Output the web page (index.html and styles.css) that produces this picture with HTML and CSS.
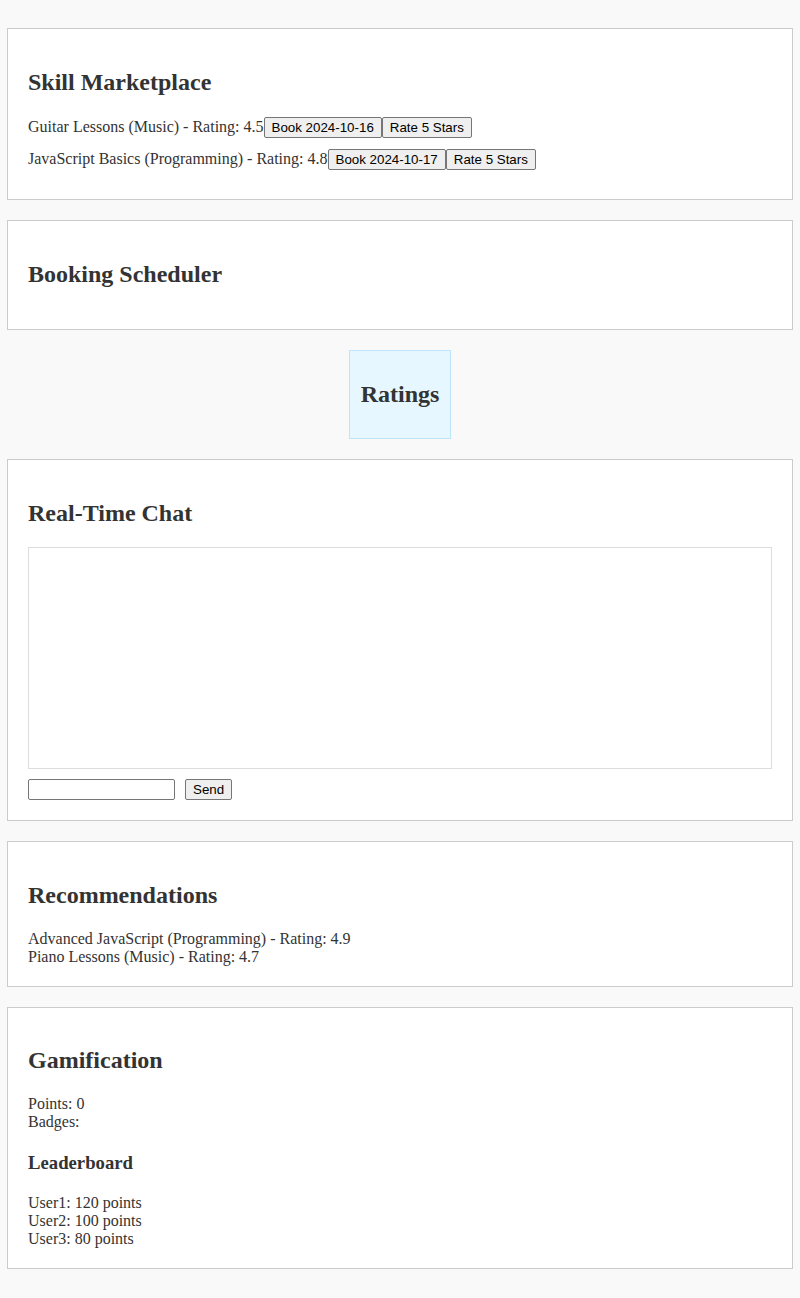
FILE: index.html
```html
<!DOCTYPE html>
<html lang="en">
<head>
<meta charset="utf-8">
<title>Skill Marketplace</title>
<link rel="stylesheet" href="styles.css">
</head>
<body>
<main class="page">
  <section class="panel">
    <h2>Skill Marketplace</h2>
    <div class="skill">Guitar Lessons (Music) - Rating: 4.5<button class="btn">Book 2024-10-16</button><button class="btn">Rate 5 Stars</button></div>
    <div class="skill">JavaScript Basics (Programming) - Rating: 4.8<button class="btn">Book 2024-10-17</button><button class="btn">Rate 5 Stars</button></div>
  </section>
  <section class="panel">
    <h2>Booking Scheduler</h2>
  </section>
  <section class="ratings">
    <h2>Ratings</h2>
  </section>
  <section class="panel">
    <h2>Real-Time Chat</h2>
    <div class="chat-log"></div>
    <div class="chat-form">
      <input class="chat-input" type="text">
      <button class="btn">Send</button>
    </div>
  </section>
  <section class="panel">
    <h2>Recommendations</h2>
    <div>Advanced JavaScript (Programming) - Rating: 4.9</div>
    <div>Piano Lessons (Music) - Rating: 4.7</div>
  </section>
  <section class="panel">
    <h2>Gamification</h2>
    <div>Points: 0</div>
    <div>Badges: </div>
    <h3>Leaderboard</h3>
    <div>User1: 120 points</div>
    <div>User2: 100 points</div>
    <div>User3: 80 points</div>
  </section>
</main>
</body>
</html>
```

FILE: styles.css
```css
html, body {
  margin: 0;
  padding: 0;
}
body {
  background: #f9f9f9;
  color: #333;
  font-family: "Liberation Serif", "Times New Roman", serif;
  font-size: 16px;
  line-height: 18px;
}
.page {
  padding: 8px 7px;
  display: flow-root;
}
.panel {
  background: #fff;
  border: 1px solid #ccc;
  padding: 20px;
  margin: 20px 0;
}
h2 {
  font-size: 24px;
  font-weight: bold;
  line-height: 27.5px;
  margin: 19.92px 0;
}
h3 {
  font-size: 18.72px;
  font-weight: bold;
  line-height: 25.5px;
  margin: 18.72px 0;
}
.skill {
  margin: 10px 0;
  height: 21.5px;
  line-height: 22px;
}
.btn {
  box-sizing: border-box;
  height: 21px;
  font-family: "Liberation Sans", Arial, sans-serif;
  font-size: 13.33px;
  color: #000;
  background: #efefef;
  border: 1px solid #767676;
  border-radius: 2px;
  padding: 0 7px;
  margin: 0;
  line-height: 19px;
  vertical-align: baseline;
}
.ratings {
  width: fit-content;
  margin: 20px auto;
  padding: 10px 11px;
  background: #e6f7ff;
  border: 1px solid #bde6f9;
}
.chat-log {
  height: 200px;
  padding: 10px;
  border: 1px solid #ddd;
  margin-bottom: 10px;
}
.chat-form {
  display: flex;
  align-items: center;
  gap: 10px;
}
.chat-input {
  box-sizing: border-box;
  width: 147px;
  height: 21px;
  padding: 1px 2px;
  border: 1px solid #767676;
  border-radius: 2px;
  font-family: "Liberation Sans", Arial, sans-serif;
  font-size: 13.33px;
  margin: 0;
}
```
